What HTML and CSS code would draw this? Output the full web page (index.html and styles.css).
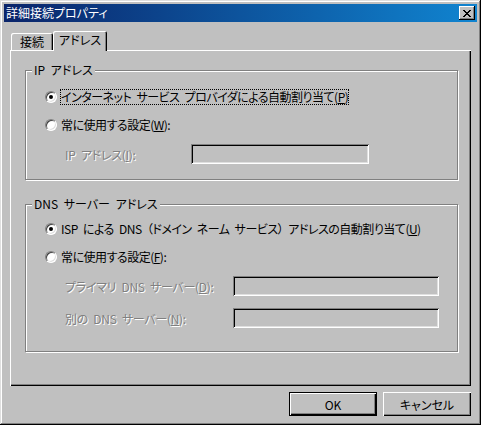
FILE: index.html
```html
<!DOCTYPE html>
<html lang="ja">
<head>
    <meta charset="UTF-8">
    <title>詳細接続プロパティ</title>
    <link rel="stylesheet" href="styles.css">
</head>
<body>
    <div class="window">
        <div class="titlebar">
            <span class="title">詳細接続プロパティ</span>
            <button class="close" aria-label="閉じる">
                <svg width="8" height="7" viewBox="0 0 8 7" shape-rendering="crispEdges">
                    <path d="M0 0h2v1h-2zM1 1h2v1h-2zM2 2h4v1h-4zM3 3h2v1h-2zM2 4h4v1h-4zM1 5h2v1h-2zM0 6h2v1h-2zM6 0h2v1h-2zM5 1h2v1h-2zM5 5h2v1h-2zM6 6h2v1h-2z" fill="#000"/>
                </svg>
            </button>
        </div>

        <div class="content">
            <div class="tabs">
                <div class="tab">接続</div>
                <div class="tab active">アドレス</div>
            </div>

            <div class="panel">
                <div class="group group-ip">
                    <span class="legend">IP アドレス</span>
                    <label class="option">
                        <span class="radio checked"></span>
                        <span class="option-text focused">インターネット サービス プロバイダによる自動割り当て(<u>P</u>)</span>
                    </label>
                    <label class="option">
                        <span class="radio"></span>
                        <span class="option-text">常に使用する設定(<u>W</u>):</span>
                    </label>
                    <div class="field">
                        <span class="field-label disabled ip-label">IP アドレス(<u>I</u>):</span>
                        <span class="input ip-input"></span>
                    </div>
                </div>

                <div class="group group-dns">
                    <span class="legend">DNS サーバー アドレス</span>
                    <label class="option">
                        <span class="radio checked"></span>
                        <span class="option-text">ISP による DNS （ドメイン ネーム サービス） アドレスの自動割り当て(<u>U</u>)</span>
                    </label>
                    <label class="option">
                        <span class="radio"></span>
                        <span class="option-text">常に使用する設定(<u>F</u>):</span>
                    </label>
                    <div class="field">
                        <span class="field-label disabled dns-label">プライマリ DNS サーバー(<u>D</u>):</span>
                        <span class="input dns-input"></span>
                    </div>
                    <div class="field field-next">
                        <span class="field-label disabled dns-label">別の DNS サーバー(<u>N</u>):</span>
                        <span class="input dns-input"></span>
                    </div>
                </div>
            </div>

            <div class="buttons">
                <button class="btn default">OK</button>
                <button class="btn">キャンセル</button>
            </div>
        </div>
    </div>
</body>
</html>
```

FILE: styles.css
```css
* {
    box-sizing: border-box;
}
body {
    margin: 0;
    background: #c0c0c0;
    font-family: "Noto Sans CJK JP", "Noto Sans", sans-serif;
    font-size: 12px;
    font-feature-settings: "palt";
    word-spacing: 3px;
    color: #000;
}
.window {
    width: 481px;
    height: 425px;
    padding: 4px;
    background: #c0c0c0;
    box-shadow: inset -1px -1px #000, inset 1px 1px #dfdfdf, inset -2px -2px #808080, inset 2px 2px #fff;
    display: flex;
    flex-direction: column;
}
.titlebar {
    height: 18px;
    flex: none;
    display: flex;
    align-items: center;
    justify-content: space-between;
    padding: 0 2px 0 2px;
    background: linear-gradient(to right, #0a246a, #1084d0);
    color: #fff;
}
.title {
    line-height: 18px;
}
.close {
    width: 16px;
    height: 14px;
    padding: 0;
    border: 0;
    background: #c0c0c0;
    box-shadow: inset -1px -1px #000, inset 1px 1px #fff, inset -2px -2px #808080;
    display: flex;
    align-items: center;
    justify-content: center;
}
.content {
    flex: 1;
    display: flex;
    flex-direction: column;
    padding: 9px 6px 5px;
}
.tabs {
    display: flex;
    align-items: flex-start;
    height: 19px;
    padding-left: 1px;
}
.tab {
    height: 17px;
    margin-top: 2px;
    padding: 0 9px;
    line-height: 17px;
    background: #c0c0c0;
    border-radius: 2px 2px 0 0;
    box-shadow: inset 1px 1px #fff, inset -1px 0 #000, inset -2px 0 #808080;
}
.tab.active {
    height: 20px;
    margin-top: 0;
    padding: 0 6px;
    line-height: 18px;
    position: relative;
    z-index: 1;
}
.panel {
    height: 336px;
    flex: none;
    padding: 20px 13px 0 15px;
    background: #c0c0c0;
    box-shadow: inset 1px 1px #fff, inset -1px -1px #000, inset -2px -2px #808080;
    display: flex;
    flex-direction: column;
    gap: 24px;
}
.group {
    border: 1px solid #808080;
    box-shadow: inset 1px 1px #fff, 1px 1px #fff;
    display: flex;
    flex-direction: column;
    padding-left: 19px;
}
.group-ip {
    height: 110px;
}
.group-dns {
    height: 148px;
}
.legend {
    align-self: flex-start;
    margin: -8px 0 0 -13px;
    padding: 0 2px;
    line-height: 14px;
    background: #c0c0c0;
}
.option {
    display: flex;
    align-items: center;
    height: 16px;
    margin-top: 12px;
}
.group-dns .legend + .option {
    margin-top: 10px;
}
.radio {
    width: 12px;
    height: 12px;
    flex: none;
    margin-right: 3px;
    border-radius: 50%;
    background: #fff;
    border: 1px solid;
    border-color: #808080 #fff #fff #808080;
    box-shadow: inset 1px 1px #404040, inset -1px -1px #dfdfdf;
    display: flex;
    align-items: center;
    justify-content: center;
}
.radio.checked::after {
    content: "";
    width: 4px;
    height: 4px;
    border-radius: 50%;
    background: #000;
}
.option-text {
    padding: 0 1px;
    line-height: 16px;
    letter-spacing: -0.5px;
    white-space: nowrap;
}
.option-text.focused {
    outline: 1px dotted #000;
    outline-offset: -1px;
}
.field {
    display: flex;
    align-items: center;
    margin-top: 11px;
    padding-left: 20px;
}
.field-next {
    margin-top: 12px;
}
.field-label {
    letter-spacing: -0.3px;
    white-space: nowrap;
}
.ip-label {
    width: 126px;
}
.dns-label {
    width: 168px;
}
.disabled {
    color: #808080;
    text-shadow: 1px 1px #fff;
}
.input {
    height: 20px;
    background: #c0c0c0;
    box-shadow: inset 1px 1px #808080, inset -1px -1px #fff, inset 2px 2px #000, inset -2px -2px #dfdfdf;
}
.ip-input {
    width: 178px;
}
.dns-input {
    width: 206px;
}
.buttons {
    display: flex;
    justify-content: flex-end;
    gap: 6px;
    margin-top: 6px;
}
.btn {
    width: 88px;
    height: 24px;
    padding: 0;
    border: 0;
    font: inherit;
    font-feature-settings: "palt";
    color: #000;
    background: #c0c0c0;
    box-shadow: inset 1px 1px #fff, inset -1px -1px #000, inset -2px -2px #808080;
}
.btn.default {
    box-shadow: inset 0 0 0 1px #000, inset 2px 2px #fff, inset -2px -2px #000, inset -3px -3px #808080;
}
```
